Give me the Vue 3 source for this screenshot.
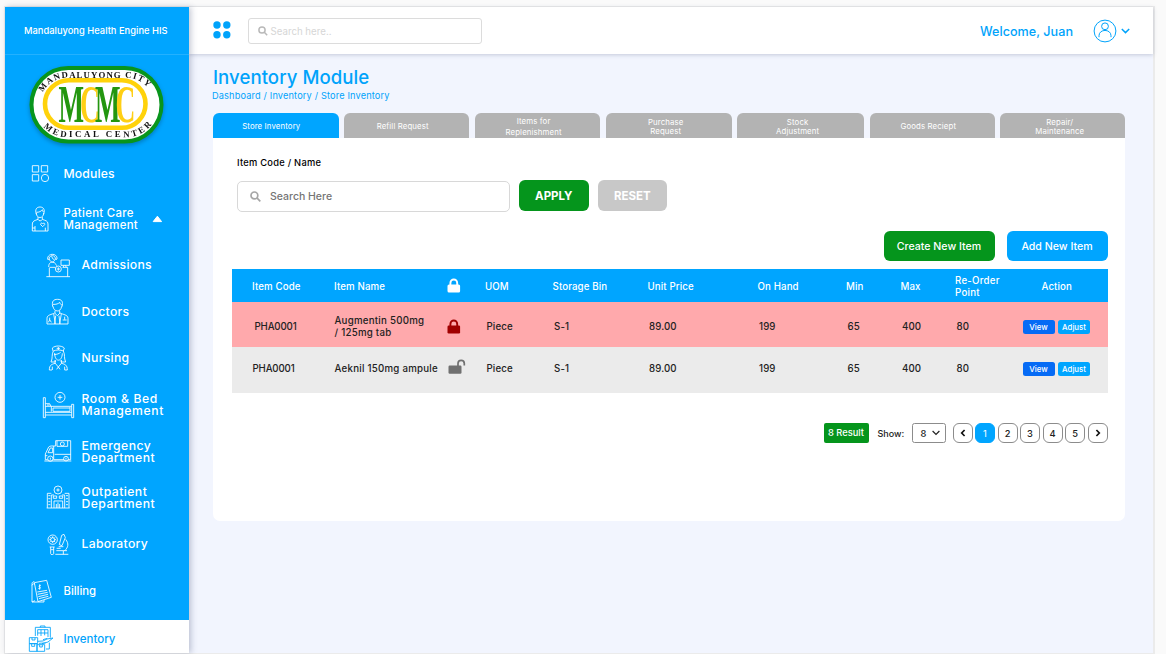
<script setup>
const ring = (x, y, r) => `M${x - r} ${y}a${r} ${r} 0 1 0 ${2 * r} 0a${r} ${r} 0 1 0 ${-2 * r} 0`

const icons = {
  modules: { box: [93, 26, 57, 57], d: ['M97 31h19v19h-19zM124 31h19v19h-19zM97 58h19v19h-19z', ring(135, 68, 11)] },
  patient: {
    box: [93, 152, 54, 78],
    d: [
      'M109 177C104 162 110 155 120 155s16 7 11 22M109 171c8 0 15-3 18-8 1 5 3 7 5 8M109 173c0 18 22 18 22 0',
      'M114 185v7c-9 4-17 4-17 14v21h47v-21c0-10-8-10-17-14v-7M114 192c3 6 10 6 13 0M105 212v15M136 217v10M97 218h8',
      'M128 214l-6-6c-1-6 5-6 6-2 2-4 8-3 6 2z',
    ],
  },
  admissions: {
    box: [138, 292, 75, 75],
    d: [
      'M143 311c-2-20 30-20 28-1M148 312c-3-16 20-16 18-1M155 302l3 7 5 3M143 311h6M166 311h5', 'M149 312c2 9 14 9 15 0M146 334c0-14 8-15 13-14 7 0 7 5 11 10M148 336v27M139 363h71M203 363v-28h-15M149 335h17',
      'M183 313h25v16h-25zM192 329l-3 6M196 329l3 6', ring(175, 340, 9), 'M170 340h10M175 335v10',
    ],
  },
  doctors: {
    box: [140, 38, 70, 80],
    d: [
      'M160 64c-3-16 2-22 15-22 13 0 17 8 13 22M161 57c9 1 17-2 20-6 1 5 4 7 7 8M161 63c2 17 23 20 26 0M167 76v7M181 76v7',
      'M143 116V99c0-11 14-11 23-16l8 8 8-8c9 5 24 5 24 16v17zM163 85l5 31M186 85l-5 31M169 91l-3 25M179 91l3 25M151 97v7l-4 7M151 103l5 8M196 94v9M190 104h12',
    ],
  },
  nursing: {
    box: [145, 178, 62, 80],
    d: [
      'M160 196l-2-9c8-8 28-8 36 0l-3 9M161 196c8-4 22-4 30 0M176 184v9M171 188h10',
      'M161 196c-6 12-1 20-7 33h12v-6M191 196c6 12 1 20 7 33h-13v-6M165 202c0 28 22 29 23 1M163 207c10-1 15-3 20-7',
      'M168 224l-2 9c-10 3-17 5-17 20M184 224l2 9c10 3 17 5 17 20M166 232l10 12 10-12M158 243v10M195 243v10M171 251l5-7 5 7M149 253h8M195 253h8',
    ],
  },
  bed: {
    box: [127, 314, 99, 84],
    d: [ring(181, 333, 15), 'M174 333h14M181 326v14', 'M131 334h6v60h-6zM216 354h6v40h-6zM137 378h79M137 386h79M137 352h13l4 8M137 360h79M155 360v16M160 365h51M160 365v10h51v-13', 'M142 356h8'],
  },
  ambulance: {
    box: [133, 44, 84, 70],
    d: [
      'M168 49h45v57h-8M193 106h-31M144 106h-7V89l10-21c2-2 5-3 8-3h7v41M145 85h14V71h-7zM162 65h6V49M165 90h48M137 94h6M172 49v17h32V49',
      ring(152, 103, 8), ring(199, 103, 7), ring(188, 59, 6), 'M134 110h81M152 100v6M199 100v6',
    ],
  },
  hospital: {
    box: [139, 183, 74, 74],
    d: [
      ring(175, 198, 12), 'M170 198h10M175 193v10M155 252v-39h8M195 252v-39h-8M143 252v-44h12M208 252v-44h-13M141 252h69M163 231h26v21M163 231v21M175 235v17M170 240v12M180 240v12',
      'M146 215h6M146 224h6M146 233h6M146 242h6M199 215h6M199 224h6M199 233h6M199 242h6M161 216h10v7h-10zM179 216h10v7h-10z',
    ],
  },
  laboratory: {
    box: [143, 322, 66, 68],
    d: [
      ring(160, 342, 14), ring(160, 342, 6), 'M160 332v5M160 347v5M150 342h5M165 342h5M153 335l3 3M164 346l3 3M167 335l-3 3M153 349l3-3',
      'M154 364v20c0 4 9 4 9 0v-20M151 364h15M155 372h8M187 329l7-3 4 10-10 24-8-3 7-28zM199 341c10 13 8 24-3 34M171 375h32M168 386h39M192 376v10M178 363h14M172 368h12',
    ],
  },
  billing: {
    box: [96, 58, 64, 74],
    d: ['M106 69l37-7 14 51-40 13zM106 66c-7 0-7 5-7 9v52h36v-6M99 77c2-6 7-5 9-3M99 127l9-4', 'M126 78c-4-3-9 2-4 4s1 7-4 4M122 74v16M115 97l29-5M116 104l30-6M118 111l29-7M120 117l28-7'],
  },
  inventory: {
    box: [85, 193, 78, 82],
    d: [
      'M107 226v-26h45v31M122 200v-4h14v4M114 207h31v22M114 207v18M124 207v19M135 207v17M114 217h31M149 246v19h-10',
      'M89 231h25v18h-25zM97 231v7h9v-7M89 249h23v23h-23zM96 249v8h9v-8M112 252h23v20h-23zM120 252v7h8v-7',
      'M114 242l16-1 12-6 18-3-15 12-18 5M130 237l13-4M118 248l20-1',
    ],
  },
}

const nav = [
  { key: 'modules', text: ['Modules'] },
  { key: 'patient', text: ['Patient Care', 'Management'], open: true },
  { key: 'admissions', text: ['Admissions'], sub: true },
  { key: 'doctors', text: ['Doctors'], sub: true },
  { key: 'nursing', text: ['Nursing'], sub: true },
  { key: 'bed', text: ['Room & Bed', 'Management'], sub: true },
  { key: 'ambulance', text: ['Emergency', 'Department'], sub: true },
  { key: 'hospital', text: ['Outpatient', 'Department'], sub: true },
  { key: 'laboratory', text: ['Laboratory'], sub: true },
  { key: 'billing', text: ['Billing'] },
  { key: 'inventory', text: ['Inventory'] },
]

const tabs = [
  ['Store Inventory'], ['Refill Request'], ['Items for', 'Replenishment'], ['Purchase', 'Request'],
  ['Stock', 'Adjustment'], ['Goods Reciept'], ['Repair/', 'Maintenance'],
]

const rows = [
  { tone: 'alert', code: 'PHA0001', name: ['Augmentin 500mg', '/ 125mg tab'], locked: true },
  { tone: 'plain', code: 'PHA0001', name: ['Aeknil 150mg ampule'], locked: false },
]
</script>

<template>
  <div class="page">
    <div class="frame">
      <aside class="side">
        <div class="brand"><span>Mandaluyong Health Engine HIS</span></div>
        <div class="logo">
          <svg width="138" height="86" viewBox="28 62 138 86">
            <defs>
              <path id="arcTop" d="M40.8 97A28.2 28.2 0 0 1 68 77.6H125A28.2 28.2 0 0 1 153 97" />
              <path id="arcBottom" d="M41.5 124.5A33 33 0 0 0 68 137.2H125A33 33 0 0 0 153 123" />
            </defs>
            <rect x="31.5" y="68" width="130" height="73.5" rx="36.7" fill="#fff" stroke="#08951d" stroke-width="4" />
            <rect x="45" y="80.3" width="100.5" height="47.5" rx="23.7" fill="#fff" stroke="#ffd20a" stroke-width="4.6" />
            <g font-family="'Liberation Serif', serif" font-weight="bold" font-size="8.8" fill="#111">
              <text><textPath href="#arcTop" startOffset="5" textLength="113">MANDALUYONG CITY</textPath></text>
              <text><textPath href="#arcBottom" startOffset="3" textLength="115">MEDICAL CENTER</textPath></text>
            </g>
            <g font-family="'Liberation Serif', serif" font-weight="bold" font-size="52" fill="#23960f">
              <text transform="translate(58.5 121.5) scale(.52 1)">M</text>
              <text transform="translate(80 121.5) scale(.53 1)" fill="#ffcf14">C</text>
              <text transform="translate(95 121.5) scale(.52 1)">M</text>
              <text transform="translate(115.5 121.5) scale(.53 1)" fill="#ffcf14">C</text>
            </g>
          </svg>
        </div>
        <nav>
          <a v-for="n in nav" :key="n.key" :class="['item', n.key, { sub: n.sub }]">
            <span class="slot">
              <svg :width="icons[n.key].box[2] / 3" :height="icons[n.key].box[3] / 3" :viewBox="icons[n.key].box.join(' ')">
                <path v-for="(d, i) in icons[n.key].d" :key="i" :d="d" fill="none" stroke="currentColor" stroke-width="2.6" stroke-linejoin="round" />
              </svg>
            </span>
            <span class="txt"><span v-for="t in n.text" :key="t">{{ t }}</span></span>
            <svg v-if="n.open" class="caret" width="11" height="8" viewBox="0 0 11 8"><path d="M5.4 1.2 9.6 6.6H1.2z" fill="#fff" stroke="#fff" stroke-linejoin="round" /></svg>
          </a>
        </nav>
      </aside>

      <div class="body">
        <header class="top">
          <svg class="dots" width="18" height="18" viewBox="0 0 18 18" fill="#00a3fb">
            <circle cx="4" cy="4" r="3.7" /><circle cx="13.8" cy="4" r="3.7" /><circle cx="4" cy="13.7" r="3.7" /><circle cx="13.8" cy="13.7" r="3.7" />
          </svg>
          <div class="find">
            <svg width="10" height="10" viewBox="0 0 10 10" fill="none" stroke="#b9b9b9" stroke-width="1.5"><circle cx="4" cy="4" r="3.1" /><path d="M6.3 6.3 9.2 9.2" /></svg>
            <span>Search here..</span>
          </div>
          <span class="hello">Welcome, Juan</span>
          <svg class="user" width="24" height="24" viewBox="0 0 24 24" fill="none" stroke="#00a3fb" stroke-width="1">
            <circle cx="12" cy="12" r="10.9" /><circle cx="12" cy="7.3" r="3.4" /><path d="M6 18.2v-1.5c0-7 12-7 12 0v1.5" />
          </svg>
          <svg class="chev" width="9" height="6" viewBox="0 0 9 6" fill="none" stroke="#00a3fb" stroke-width="1.5"><path d="M.8 1 4.5 4.6 8.2 1" /></svg>
        </header>

        <main>
          <h1>Inventory Module</h1>
          <p class="crumbs">Dashboard / Inventory / Store Inventory</p>
          <div class="tabs">
            <div v-for="(t, i) in tabs" :key="i" :class="['tab', { on: i === 0, loose: i === 2, single: t.length === 1 }]"><span v-for="l in t" :key="l">{{ l }}</span></div>
          </div>
          <section class="card">
            <div class="label">Item Code / Name</div>
            <div class="filter">
              <div class="query">
                <svg width="11" height="11" viewBox="0 0 11 11" fill="none" stroke="#a6a6a6" stroke-width="1.7"><circle cx="4.4" cy="4.4" r="3.4" /><path d="M6.9 6.9 10.3 10.3" /></svg>
                <span>Search Here</span>
              </div>
              <button class="apply">APPLY</button>
              <button class="reset">RESET</button>
            </div>
            <div class="actions">
              <button class="create">Create New Item</button>
              <button class="add">Add New Item</button>
            </div>
            <div class="table">
              <div class="row head">
                <span>Item Code</span><span>Item Name</span>
                <svg width="14" height="16" viewBox="0 0 14 16"><rect x=".5" y="6.5" width="12.6" height="8" rx="1.5" fill="#fff" /><path d="M3.4 7V4.9a3.4 3.4 0 0 1 6.8 0V7" fill="none" stroke="#fff" stroke-width="1.9" /></svg>
                <span>UOM</span><span>Storage Bin</span><span>Unit Price</span><span>On Hand</span><span>Min</span><span>Max</span>
                <span class="two"><span>Re-Order</span><span>Point</span></span><span>Action</span>
              </div>
              <div v-for="r in rows" :key="r.tone" :class="['row', r.tone]">
                <span>{{ r.code }}</span>
                <span class="two"><span v-for="l in r.name" :key="l">{{ l }}</span></span>
                <svg v-if="r.locked" width="14" height="16" viewBox="0 0 14 16"><rect x=".5" y="6.5" width="12.6" height="8" rx="1.2" fill="#a00000" /><path d="M3.4 7V4.9a3.4 3.4 0 0 1 6.8 0V7" fill="none" stroke="#a00000" stroke-width="1.9" /></svg>
                <svg v-else width="19" height="16" viewBox="0 0 19 16"><rect x="1.5" y="6.5" width="13" height="8.2" rx="1.2" fill="#707070" /><path d="M11 7V4.6a3.1 3.1 0 0 1 6.3 0V6.6" fill="none" stroke="#707070" stroke-width="1.7" /></svg>
                <span>Piece</span><span>S-1</span><span>89.00</span><span>199</span><span>65</span><span>400</span><span>80</span>
                <span class="ops"><button class="view">View</button><button class="adjust">Adjust</button></span>
              </div>
            </div>
            <div class="pager">
              <span class="count">8 Result</span>
              <span class="show">Show:</span>
              <span class="size">8<svg width="8" height="6" viewBox="0 0 8 6" fill="none" stroke="#222" stroke-width="1.2"><path d="M.6 1 4 4.4 7.4 1" /></svg></span>
              <div class="pages">
                <span><svg width="6" height="8" viewBox="0 0 6 8" fill="none" stroke="#111" stroke-width="1.7"><path d="M4.6 1 1.7 4 4.6 7" /></svg></span>
                <span v-for="p in 5" :key="p" :class="{ on: p === 1 }">{{ p }}</span>
                <span><svg width="6" height="8" viewBox="0 0 6 8" fill="none" stroke="#111" stroke-width="1.7"><path d="M1.4 1 4.3 4 1.4 7" /></svg></span>
              </div>
            </div>
          </section>
        </main>
      </div>
    </div>
  </div>
</template>

<style>
body { margin: 0; background: #fafafa; }
</style>

<style scoped>
* { box-sizing: border-box; }
.page { width: 1166px; height: 654px; overflow: hidden; padding: 6px 11px 0 4px; background: #fafafa; font-family: Inter, "Open Sans", sans-serif; }
.frame { display: flex; height: 648px; border: 1.5px solid #ebebeb; border-width: 1px 2px 1px 1px; background: #f2f5fe; }
.side { position: relative; z-index: 2; width: 184px; height: 646px; flex: none; background: #00a5ff; color: #fff; box-shadow: 2px 0 6px rgba(60, 70, 110, .3); }
.brand { height: 48px; padding-left: 19px; display: flex; align-items: center; border-bottom: 1px solid #23b1ff; font-size: 9.3px; font-weight: 500; letter-spacing: .03px; white-space: nowrap; }
.logo { height: 95px; padding: 7px 0 0 23px; }
.logo svg { display: block; filter: drop-shadow(0 2px 2px rgba(0, 0, 0, .25)); }
nav { display: flex; flex-direction: column; }
.item { display: flex; align-items: center; height: 46.4px; padding-left: 22px; font-size: 12.2px; font-weight: 500; letter-spacing: .3px; line-height: 12px; }
.item.modules { height: 46px; }
.item.sub { padding-left: 36px; }
.slot { width: 26px; display: flex; justify-content: center; }
.sub .slot { width: 34px; }
.slot svg { flex: none; }
.txt { display: flex; flex-direction: column; margin-left: 10.5px; }
.sub .txt { margin-left: 6.5px; }
.patient .txt { font-size: 11.4px; letter-spacing: .3px; }
.modules .txt { letter-spacing: .15px; padding-top: 1px; }
.bed .txt { padding-top: 1px; letter-spacing: .6px; }
.ambulance .txt { padding-top: 1px; letter-spacing: .45px; }
.hospital .txt { padding-top: 1px; letter-spacing: .45px; }
.admissions .slot, .admissions .txt { margin-top: -1px; }
.doctors .slot { margin-top: -1px; }
.caret { margin-left: 14.5px; }
.item.billing { height: 52.5px; padding: 0 0 4px 24px; }
.billing .txt { margin-left: 8.5px; font-size: 11.3px; letter-spacing: 0; }
.item.inventory { height: 33.5px; padding: 4px 0 0 23px; background: #fff; color: #00a3fb; font-size: 11.5px; }
.inventory .txt { margin-left: 9.5px; padding-top: 1px; letter-spacing: 0; }

.body { flex: 1; min-width: 0; }
.top { position: relative; display: flex; align-items: center; height: 47px; padding: 0 23px 0 23.5px; background: #fff; box-shadow: 0 1px 4px rgba(60, 70, 110, .25); }
.dots { margin-right: 17px; margin-top: -2px; }
.find { display: flex; align-items: center; gap: 4px; width: 234px; height: 26px; padding-left: 9px; border: 1px solid #dcdcdc; border-radius: 3px; font-size: 9.7px; color: #d6d6d6; }
.find span { margin-left: -1px; padding-top: 1px; }
.hello { margin-left: auto; padding-top: 1px; font-size: 12.6px; font-weight: 500; letter-spacing: .03px; color: #00a3fb; }
.user { margin-left: 20px; }
.chev { margin-left: 4px; }

main { padding: 12px 0 0 24px; }
h1 { margin: 0; height: 24px; line-height: 23px; font-size: 18.6px; font-weight: 500; letter-spacing: .05px; color: #00a3fb; }
.crumbs { margin: 0 0 0 -1px; height: 12px; line-height: 12px; font-size: 9.2px; letter-spacing: .16px; color: #00a3fb; }
.tabs { display: grid; grid-template-columns: 125.5px 125.5px 125.5px 126px 127px 125.5px 124.5px; justify-content: space-between; width: 912px; height: 25px; margin-top: 11px; }
.tab { display: flex; flex-direction: column; align-items: center; justify-content: center; padding: 2px 6px 0 0; border-radius: 6px 6px 0 0; background: #b3b3b3; color: #fff; font-size: 7.8px; letter-spacing: .13px; line-height: 9px; white-space: nowrap; }
.tab.single { padding-right: 8px; }
.tab.loose { line-height: 10.5px; padding-right: 8px; }
.tab.on { background: #00a5ff; padding-right: 9px; }
.card { width: 912px; height: 382.5px; padding: 19px 17.5px 0 18.5px; border-radius: 0 0 7px 7px; background: #fff; }
.label { padding-left: 5.5px; height: 12px; line-height: 12px; font-size: 9.3px; font-weight: 500; letter-spacing: .26px; color: #000; }
.filter { display: flex; align-items: center; padding-left: 5.5px; margin-top: 11px; height: 32px; }
.query { display: flex; align-items: center; gap: 9px; width: 273px; height: 31px; padding-left: 12px; border: 1px solid #d8d8d8; border-radius: 5px; font-size: 10.5px; font-weight: 500; color: #757575; }
button { border: 0; padding: 0; font-family: inherit; color: #fff; font-weight: 500; }
.apply, .reset { width: 69.5px; height: 31px; border-radius: 6px; font-size: 11.5px; font-weight: 700; }
.apply { margin: -1px 9px 0; background: #05951c; }
.reset { margin-top: -1px; background: #c8c8c8; }
.actions { display: flex; justify-content: flex-end; gap: 12px; margin-top: 19px; }
.actions button { height: 30px; border-radius: 6px; font-size: 10.6px; }
.create { width: 111px; background: #05951c; }
.add { width: 101px; background: #00a5ff; }
.table { margin-top: 8px; font-size: 9.7px; font-weight: 500; color: #222; }
.row { display: grid; grid-template-columns: 82px 113px 38px 67.5px 95px 110px 88.5px 54.5px 54.5px 66.5px 1fr; align-items: center; padding-left: 20.5px; line-height: 12px; white-space: nowrap; }
.row.head { height: 33px; padding-top: 3px; background: #00a5ff; color: #fff; }
.row.alert { height: 45px; padding-top: 4px; background: #ffa9ac; }
.row.plain { height: 46px; padding-bottom: 3px; background: #ebebeb; }
.row.head > span:last-child { padding-left: 20px; }
.row > span { letter-spacing: .12px; }
.alert > span, .plain > span { padding-left: 1.5px; }
.alert > span:first-child { padding-left: 2.5px; letter-spacing: -.15px; }
.plain > span:first-child { padding-left: .5px; letter-spacing: -.15px; }
.row > .two { display: flex; flex-direction: column; padding-left: 0; letter-spacing: .25px; }
.alert > .two, .plain > .two { padding-left: .5px; }
.row > svg { margin-top: -3px; }
.alert > svg { margin-top: 0; }
.row > .ops { display: flex; gap: 3.5px; padding-left: 1px; letter-spacing: 0; }
.ops button { width: 32px; height: 14px; border-radius: 2.5px; font-size: 7.8px; line-height: 14px; }
.view { background: #066bf5; }
.adjust { background: #00a5ff; }
.pager { display: flex; align-items: center; justify-content: flex-end; margin-top: 30px; height: 20px; font-size: 9.3px; font-weight: 500; color: #222; }
.count { width: 45px; height: 20px; line-height: 20px; text-align: center; border-radius: 2px; background: #05951c; color: #fff; }
.show { margin: 0 8px 0 9px; width: 26px; font-size: 9px; white-space: nowrap; }
.size { display: flex; align-items: center; justify-content: space-between; width: 34px; height: 20px; padding: 0 5px 0 8px; border: 1px solid #8c8c8c; border-radius: 2.5px; }
.pages { display: flex; gap: 2.5px; margin-left: 7px; }
.pages span { display: flex; align-items: center; justify-content: center; width: 20px; height: 20px; border: 1px solid #8c8c8c; border-radius: 6px; }
.pages .on { border-color: #00a5ff; background: #00a5ff; color: #fff; font-weight: 400; }
</style>
